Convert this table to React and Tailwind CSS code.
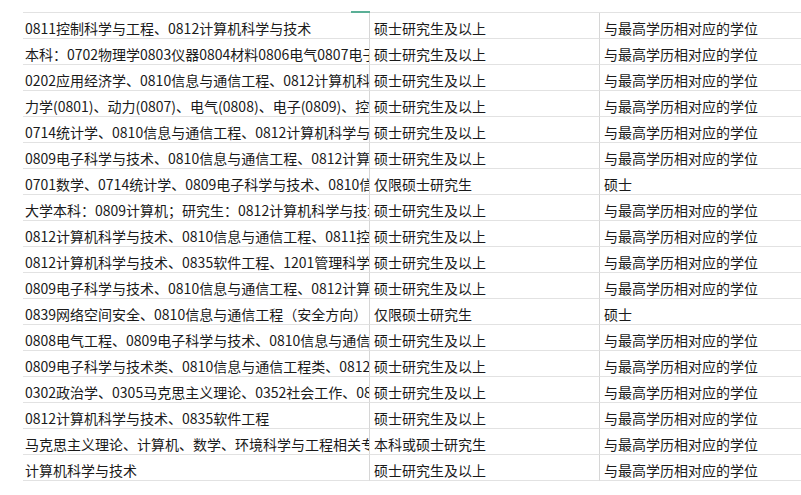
import React from "react";

const rows = [
  ["0811控制科学与工程、0812计算机科学与技术", "硕士研究生及以上", "与最高学历相对应的学位"],
  ["本科：0702物理学0803仪器0804材料0806电气0807电子0808电气0809电子", "硕士研究生及以上", "与最高学历相对应的学位"],
  ["0202应用经济学、0810信息与通信工程、0812计算机科学与技术", "硕士研究生及以上", "与最高学历相对应的学位"],
  ["力学(0801)、动力(0807)、电气(0808)、电子(0809)、控制(0811)", "硕士研究生及以上", "与最高学历相对应的学位"],
  ["0714统计学、0810信息与通信工程、0812计算机科学与技术", "硕士研究生及以上", "与最高学历相对应的学位"],
  ["0809电子科学与技术、0810信息与通信工程、0812计算机科学与技术", "硕士研究生及以上", "与最高学历相对应的学位"],
  ["0701数学、0714统计学、0809电子科学与技术、0810信息与通信工程", "仅限硕士研究生", "硕士"],
  ["大学本科：0809计算机；研究生：0812计算机科学与技术", "硕士研究生及以上", "与最高学历相对应的学位"],
  ["0812计算机科学与技术、0810信息与通信工程、0811控制科学与工程", "硕士研究生及以上", "与最高学历相对应的学位"],
  ["0812计算机科学与技术、0835软件工程、1201管理科学与工程", "硕士研究生及以上", "与最高学历相对应的学位"],
  ["0809电子科学与技术、0810信息与通信工程、0812计算机科学与技术", "硕士研究生及以上", "与最高学历相对应的学位"],
  ["0839网络空间安全、0810信息与通信工程（安全方向）", "仅限硕士研究生", "硕士"],
  ["0808电气工程、0809电子科学与技术、0810信息与通信工程", "硕士研究生及以上", "与最高学历相对应的学位"],
  ["0809电子科学与技术类、0810信息与通信工程类、0812计算机类", "硕士研究生及以上", "与最高学历相对应的学位"],
  ["0302政治学、0305马克思主义理论、0352社会工作、0812计算机", "硕士研究生及以上", "与最高学历相对应的学位"],
  ["0812计算机科学与技术、0835软件工程", "硕士研究生及以上", "与最高学历相对应的学位"],
  ["马克思主义理论、计算机、数学、环境科学与工程相关专业", "本科或硕士研究生", "与最高学历相对应的学位"],
  ["计算机科学与技术", "硕士研究生及以上", "与最高学历相对应的学位"],
];

const Cell = ({ children, right, first }) => (
  <div
    className={
      "h-[26px] flex items-end pb-[1px] overflow-hidden whitespace-nowrap border-b border-[#e2e2e2] " +
      (first ? "pl-[2px] " : "pl-[4px] ") +
      (right ? "border-r border-r-[#d6d6d6]" : "")
    }
  >
    <span className="leading-[18px]">{children}</span>
  </div>
);

const App = () => {
  return (
    <div
      className="w-[801px] h-[495px] bg-white overflow-hidden text-[14px] text-[#1a1a1a]"
      style={{ fontFamily: '"Noto Sans CJK SC", "Noto Sans", sans-serif' }}
    >
      <div className="pt-[12px] pl-[23px]">
        <div className="relative">
          <div className="absolute left-[328px] top-[-1px] w-[19px] h-[2px] bg-[#5aaf96]" />
          <div className="grid grid-cols-[347px_230px_300px] border-t border-[#e2e2e2]">
            {rows.map((r, i) => (
              <React.Fragment key={i}>
                <Cell right first>{r[0]}</Cell>
                <Cell right>{r[1]}</Cell>
                <Cell>{r[2]}</Cell>
              </React.Fragment>
            ))}
          </div>
        </div>
      </div>
    </div>
  );
};

export default App;
